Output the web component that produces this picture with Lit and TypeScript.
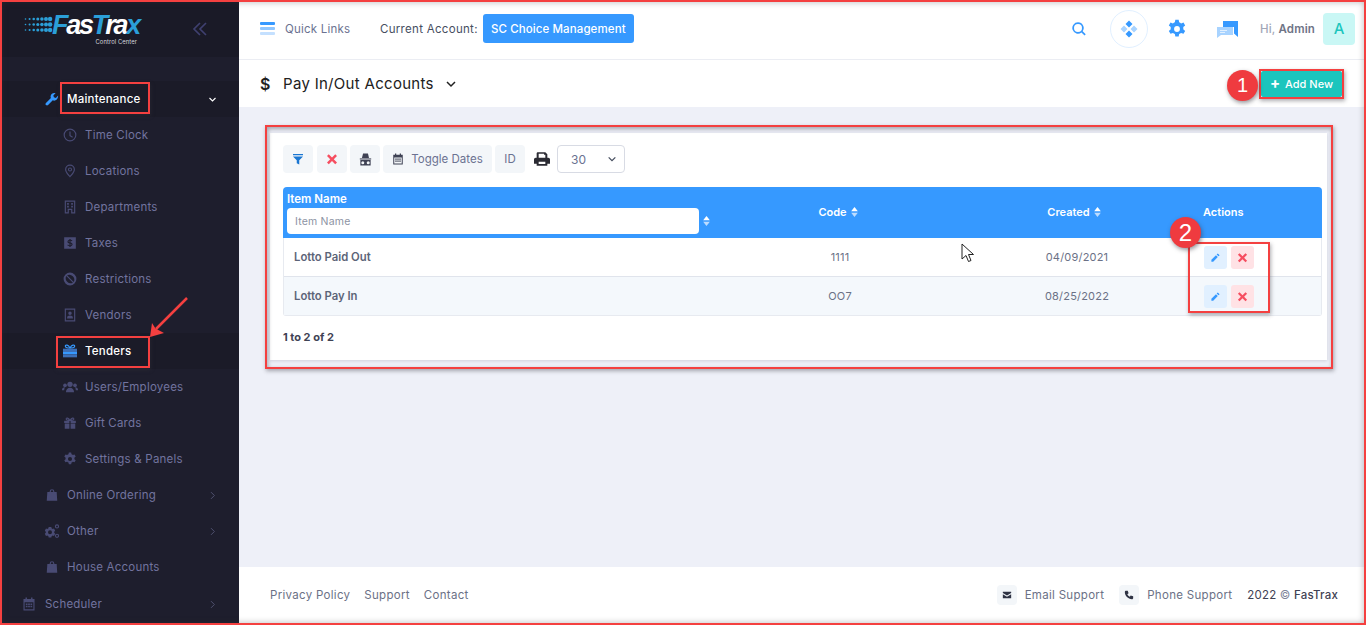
import { LitElement, html, css, svg } from "lit";
import { customElement } from "lit/decorators.js";

const I = (d: any, vb = "0 0 24 24", cls = "") => html`<svg class="ic ${cls}" viewBox=${vb} fill="currentColor">${d}</svg>`;
const icons: Record<string, any> = {
  wrench: svg`<path d="M22.5 6.2l-3.9 3.9-3.4-.9-.9-3.4 3.9-3.9c-2.3-.8-5-.3-6.800 1.500-1.900 1.900-2.300 4.600-1.300 6.900L1.700 18.700c-1.100 1.100-1.100 2.700 0 3.700 1 1 2.600 1 3.600 0l8-8.100c2.300 1 5 .5 6.900-1.300 1.800-1.800 2.400-4.500 2.300-6.800z"/>`,
  clock: svg`<path fill-rule="evenodd" d="M12 1a11 11 0 100 22 11 11 0 000-22zm0 2a9 9 0 110 18 9 9 0 010-18z"/><path d="M11 6h2v6.500l4 2.300-1 1.700-5-3z"/>`,
  pin: svg`<path fill-rule="evenodd" d="M12 1a8.500 8.500 0 00-8.500 8.500C3.500 15 12 23 12 23s8.500-8 8.500-13.500A8.500 8.500 0 0012 1zm0 2a6.500 6.500 0 016.500 6.500c0 3.500-4.500 8.700-6.500 10.700-2-2-6.500-7.200-6.500-10.700A6.500 6.500 0 0112 3z"/><path fill-rule="evenodd" d="M12 6a3.500 3.500 0 100 7 3.500 3.500 0 000-7zm0 1.700a1.800 1.800 0 110 3.600 1.800 1.800 0 010-3.600z"/>`,
  building: svg`<path fill-rule="evenodd" d="M3 1h18v22h-7v-6h-4v6H3zm2 2v18h3v-6h8v6h3V3zm2 2h3v3H7zm7 0h3v3h-3zm-7 5h3v3H7zm7 0h3v3h-3z"/>`,
  dollar: svg`<path fill-rule="evenodd" d="M2 2h20v20H2zm9 3v1.500c-2 .3-3.300 1.500-3.300 3.200 0 1.900 1.400 2.700 3.300 3.200v3c-1-.1-1.900-.6-2.500-1.200L7.200 16c.9.900 2.200 1.400 3.800 1.600V19h2v-1.400c2.100-.3 3.400-1.600 3.400-3.400 0-1.900-1.400-2.700-3.400-3.200V8.200c.7.100 1.400.4 2 .9l1.200-1.400c-.8-.7-1.900-1.100-3.200-1.200V5zm0 3.100v2.400c-.9-.3-1.400-.6-1.400-1.200s.5-1.100 1.400-1.200zm2 5.300c.9.300 1.500.6 1.500 1.300s-.6 1.100-1.500 1.200z"/>`,
  ban: svg`<path fill-rule="evenodd" d="M12 1a11 11 0 100 22 11 11 0 000-22zM5.600 7l11.400 11.400A8.500 8.500 0 015.600 7zM7 5.600A8.500 8.500 0 0118.400 17z"/>`,
  contact: svg`<path fill-rule="evenodd" d="M3 1h18v22H3zm2 2v18h14V3zm7 3a3 3 0 110 6 3 3 0 010-6zM7 17c0-2.500 2-4 5-4s5 1.500 5 4v1H7z"/>`,
  gift1: svg`<path fill="none" stroke="#3699ff" stroke-width="1.800" d="M12 7.500C9.500 2.500 5 2 5 4.800S9.500 7.500 12 7.500c2.500 0 7 0 7-2.700S14.500 2.500 12 7.500z"/><path fill="#3d6fb8" d="M1.500 8.500h21v5h-21z"/><path fill="#3699ff" d="M1.500 13.500h21V17h-21z"/><path fill="#3d6fb8" d="M1.500 17h21v4.500h-21z"/>`,
  users: svg`<circle cx="12" cy="8" r="4"/><circle cx="4.500" cy="9.500" r="2.800"/><circle cx="19.500" cy="9.500" r="2.800"/><path d="M6 19c0-3.500 2.500-6 6-6s6 2.500 6 6v1H6zM0 16c0-2 1.500-3.500 4.500-3.500-.7 1-1.200 2.500-1.200 4.500H0zM24 16c0-2-1.500-3.500-4.500-3.500.7 1 1.200 2.500 1.200 4.500H24z"/>`,
  gift: svg`<path d="M2 8h9v4H2zM13 8h9v4h-9zM3 13h8v9H3zM13 13h8v9h-8z"/><path fill="none" stroke="currentColor" stroke-width="2" d="M12 7.500C9 3 5.500 2.500 5.500 5S9 7.500 12 7.500 18.500 7.500 18.500 5 15 3 12 7.500z"/>`,
  gear: svg`<path fill-rule="evenodd" d="M10 1h4l.6 3a8 8 0 012.300 1.300l2.900-1 2 3.400-2.300 2a8 8 0 010 2.600l2.300 2-2 3.400-2.900-1a8 8 0 01-2.300 1.300l-.6 3h-4l-.6-3a8 8 0 01-2.300-1.300l-2.900 1-2-3.400 2.300-2a8 8 0 010-2.600l-2.300-2 2-3.400 2.900 1A8 8 0 019.400 4zM12 8.500a3.500 3.500 0 100 7 3.500 3.500 0 000-7z"/>`,
  bag: svg`<path fill-rule="evenodd" d="M8 7V6a4 4 0 018 0v1h4l1 15H3L4 7zm2 0h4V6a2 2 0 00-4 0z"/>`,
  gears: svg`<path fill-rule="evenodd" d="M7 6h4l.4 2 1.600 1 2-.6 1.800 3.100-1.500 1.500v1.800l1.500 1.500-1.800 3.100-2-.6-1.600 1-.4 2H7l-.4-2-1.600-1-2 .6-1.800-3.100L2.700 14.800v-1.800L1.200 11.500 3 8.400l2 .6 1.600-1zm2 5a3 3 0 100 6 3 3 0 000-6z"/><path fill-rule="evenodd" d="M19.500 2a3.200 3.200 0 100 6.400 3.200 3.200 0 000-6.400zm0 1.700a1.500 1.500 0 110 3 1.500 1.500 0 010-3zM19.500 16a3.200 3.200 0 100 6.400 3.200 3.200 0 000-6.400zm0 1.700a1.500 1.500 0 110 3 1.500 1.500 0 010-3z"/>`,
  cal: svg`<path fill-rule="evenodd" d="M6 1h2.500v2.500h7V1H18v2.500h3.500V23h-19V3.500H6zM4.500 9v12h15V9zM6.500 11h3v2.500h-3zm4 0h3v2.500h-3zm4 0h3v2.500h-3zm-8 4h3v2.500h-3zm4 0h3v2.500h-3zm4 0h3v2.500h-3z"/>`,
  filter: svg`<path d="M2 2h20v2.500H2zM2 7h20l-7.500 7.500V23l-5-2.500v-6z"/>`,
  x: svg`<path d="M5.500 2.500L12 9l6.500-6.500 3.500 3.500-6.500 6.500 6.500 6.500-3.500 3.500L12 16l-6.500 6.500L2 19l6.500-6.500L2 6z"/>`,
  spy: svg`<path d="M7.500 1h9l2 8h-13z"/><path d="M1.500 10h21v2h-21z"/><path fill-rule="evenodd" d="M2.500 13h19v10h-19zm4.500 2a2.800 2.800 0 000 5.600A2.800 2.800 0 007 15zm10 0a2.800 2.800 0 000 5.600 2.800 2.800 0 000-5.600z"/>`,
  print: svg`<path fill-rule="evenodd" d="M5 2h12l3 3v5h1.500A2.500 2.500 0 0124 12.500V19h-4v3H4v-3H0v-6.500A2.500 2.500 0 012.500 10H4V3zm2 2v6h10V5.500h-2V4zm0 12v3.500h10V16z"/>`,
  pencil: svg`<path d="M17 3l4 4-2.500 2.500-4-4zM13 7l4 4L7 21H3v-4z"/>`,
  search: svg`<path fill-rule="evenodd" d="M10.500 2a8.500 8.500 0 105.200 15.200l4.600 4.600 1.800-1.800-4.600-4.600A8.500 8.500 0 0010.500 2zm0 2.500a6 6 0 110 12 6 6 0 010-12z"/>`,
  mail: svg`<path d="M2 4h20v3l-10 6L2 7zM2 10l10 6 10-6v10H2z"/>`,
  phone: svg`<path d="M5 2h4l2 6-3 2c1 2.500 3.500 5 6 6l2-3 6 2v4c0 1.500-1 3-3 3C10 22 2 14 2 5c0-2 1.500-3 3-3z"/>`,
  chevD: svg`<path fill="none" stroke="currentColor" stroke-width="3" d="M4 8l8 8 8-8"/>`,
  chevR: svg`<path fill="none" stroke="currentColor" stroke-width="2.600" d="M8 3l9 9-9 9"/>`,
};

const sub = [
  ["clock", "Time Clock"], ["pin", "Locations"], ["building", "Departments"], ["dollar", "Taxes"],
  ["ban", "Restrictions"], ["contact", "Vendors"], ["gift1", "Tenders"], ["users", "Users/Employees"],
  ["gift", "Gift Cards"], ["gear", "Settings & Panels"],
];
const rows = [
  { name: "Lotto Paid Out", code: "1111", date: "04/09/2021" },
  { name: "Lotto Pay In", code: "OO7", date: "08/25/2022" },
];
const dots = [0, 1, 2].flatMap((r) =>
  [0, 1, 2, 3, 4, 5, 6].map((c) => ({ x: 1.500 + c * 4.100, y: 3 + r * 5.500, r: 0.8 + c * 0.24 }))
);

@customElement("app-root")
export class AppRoot extends LitElement {
  static styles = css`
    :host { display: flex; position: relative; width: 1366px; height: 625px; overflow: hidden; background: #eef0f8;
      font-family: "Inter", "Noto Sans", sans-serif; font-size: 11.5px; color: #464e5f; }
    * { box-sizing: border-box; }
    .ic { width: 14px; height: 14px; flex: none; display: block; }

    /* sidebar */
    .side { width: 239px; flex: none; background: #1e1e2d; display: flex; flex-direction: column; }
    .brand { height: 57px; background: #1a1a27; display: flex; align-items: flex-start; justify-content: space-between; padding: 13px 31px 0 24px; flex: none; }
    .logo { display: flex; align-items: flex-start; }
    .logo svg { width: 29px; height: 18px; margin-top: 3px; flex: none; }
    .lockup { width: 88px; margin-left: -1px; display: flex; flex-direction: column; }
    .word { font: italic 700 27px/25px "Liberation Sans", sans-serif; color: #fff; letter-spacing: -2.300px; white-space: nowrap; }
    .word b { color: #2b9fd8; font-weight: 700; }
    .word .tx { color: #2b9fd8; }
    .tag { align-self: flex-end; margin-right: 3px; font: 400 5.800px/7px "Inter", sans-serif; color: #d6d6de; letter-spacing: .1px; }
    .collapse { width: 16px; height: 16px; color: #3f4070; margin-top: 8px; }
    .collapse svg { width: 16px; height: 16px; display: block; }
    .menu { padding-top: 24px; display: flex; flex-direction: column; }
    .item { height: 36px; display: flex; align-items: center; color: #72749f; white-space: nowrap; letter-spacing: .22px; }
    .item .ic { color: #494b74; }
    .l1 { padding-left: 45px; }
    .l1 .lab { margin-left: 8px; }
    .l2 { padding-left: 63px; }
    .l2 .lab { margin-left: 8px; }
    .l0 { padding-left: 22px; margin-top: 1px; }
    .l0 .lab { margin-left: 9px; }
    .item .wide { width: 16px; height: 16px; margin: 0 -1px; }
    .chev { margin-left: auto; margin-right: 22px; width: 9px !important; height: 9px !important; color: #4f506f !important; }
    .active { background: #1b1b28; color: #fff; font-weight: 500; }
    .active .ic { color: #3699ff; }
    .active .chev { color: #fff !important; }

    /* main */
    .main { flex: 1; min-width: 0; display: flex; flex-direction: column; }
    .top { height: 60px; flex: none; background: #fff; border-bottom: 1px solid #ebedf3; display: flex; align-items: center; padding: 0 11px 2px 21px; }
    .burger { width: 15px; height: 13px; display: flex; flex-direction: column; justify-content: space-between; margin-right: 10px; }
    .burger i { display: block; height: 3px; border-radius: 1px; background: #3699ff; }
    .burger i:nth-child(2) { background: #8fc6ff; } .burger i:nth-child(3) { background: #c4e0ff; }
    .ql { color: #6b7291; letter-spacing: .2px; width: 95px; }
    .ca { color: #464e5f; letter-spacing: .3px; margin-right: 5px; }
    .acct { background: #3699ff; color: #fff; height: 29px; width: 151px; border-radius: 3px; display: flex; align-items: center; justify-content: center; font-weight: 500; letter-spacing: .1px; }
    .tools { margin-left: auto; display: flex; align-items: center; }
    .t-search { color: #3699ff; width: 16px; height: 16px; margin-right: 23px; }
    .orb { width: 38px; height: 38px; border-radius: 50%; border: 1.500px solid #e1f0ff; display: flex; align-items: center; justify-content: center; margin-right: 19px; }
    .orb svg { width: 20px; height: 20px; display: block; }
    .t-gear { color: #3699ff; width: 20px; height: 20px; margin-right: 30px; }
    .chat { width: 21px; height: 18px; margin-right: 22px; display: block; }
    .hi { color: #a2a7b8; font-weight: 500; margin-right: 8px; letter-spacing: .15px; }
    .hi b { color: #6f7486; font-weight: 600; }
    .av { width: 32px; height: 32px; border-radius: 4px; background: #c9f7f5; color: #1bc5bd; font-size: 15px; font-weight: 500; display: flex; align-items: center; justify-content: center; }

    .subh { height: 47px; flex: none; background: #fff; display: flex; align-items: center; padding: 0 24px 0 21px; }
    .dol { font-size: 16px; font-weight: 600; color: #212121; width: 23px; }
    .title { font-size: 15px; color: #212121; letter-spacing: .3px; }
    .tch { width: 12px !important; height: 12px !important; margin-left: 11px; color: #212121; }
    .add { margin-left: auto; width: 81px; height: 26px; background: #1bc5bd; color: #fff; border-radius: 2px; display: flex; align-items: center; justify-content: center; gap: 5px; font-weight: 500; font-size: 11px; }
    .plus { font-size: 15px; line-height: 15px; font-weight: 700; margin-top: -3px; }

    .content { flex: 1; min-height: 0; padding: 26px 39px 0 31px; }
    .card { background: #fff; padding: 12px 5px 0 13px; height: 227px; box-shadow: 0 1px 3px rgba(80,80,110,.2); }
    .bar { display: flex; align-items: center; height: 28px; }
    .b { height: 28px; background: #f3f6f9; border-radius: 4px; display: flex; align-items: center; justify-content: center; margin-right: 3px; color: #6b7291; }
    .b .ic { width: 12px; height: 12px; }
    .w30 { width: 30px; }
    .b-x { color: #f64e60; }
    .b-f { color: #1976d2; margin-right: 4px; }
    .b-s { color: #3f4254; }
    .b-s .ic { width: 13px; height: 13px; }
    .dates { width: 109px; gap: 7px; }
    .dates .ic { color: #3f4254; }
    .print { width: 16px; height: 16px; color: #2b2b33; margin: 0 7px 0 6px; }
    .sel { width: 68px; height: 28px; border: 1px solid #d8dbe4; border-radius: 4px; padding: 0 7px 0 13px; display: flex; align-items: center; justify-content: space-between; color: #6b7291; font-size: 12px; }
    .sel .ic { width: 10px; height: 10px; color: #464e5f; }

    .table { margin-top: 14px; }
    .row { display: grid; grid-template-columns: 439px 236px 220px 144px; align-items: center; }
    .head { height: 51px; background: #3699ff; border-radius: 4px 4px 0 0; color: #fff; font-weight: 600; font-size: 11px; }
    .namecol { display: flex; flex-direction: column; padding: 5px 0 0 4px; height: 100%; font-size: 11.500px; }
    .inp-row { display: flex; align-items: center; gap: 4px; margin-top: 2px; }
    .inp { width: 412px; height: 26px; background: #fff; border-radius: 4px; color: #8d93a3; font-weight: 400; display: flex; align-items: center; padding-left: 8px; font-size: 10.500px; letter-spacing: .2px; }
    .sort { width: 7px; height: 10px; display: block; flex: none; }
    .hc { display: flex; justify-content: center; align-items: center; gap: 4px; margin-top: -2px; }
    .hc.code { padding-right: 4px; }
    .hc.cre { padding-left: 12px; }
    .act { padding-left: 25px; margin-top: -2px; }
    .body { border: 1px solid #e7eaf0; border-top: none; border-radius: 0 0 3px 3px; }
    .tr { height: 39px; border-bottom: 1px solid #e0e4ec; grid-template-columns: 438px 236px 220px 144px; color: #6b7186; }
    .tr:last-child { border-bottom: none; height: 38px; }
    .tr.alt { background: #f4f8fc; }
    .nm { padding-left: 10px; font-weight: 600; color: #5c6478; font-size: 11.300px; }
    .cc { text-align: center; font-size: 11px; letter-spacing: .2px; }
    .cc.dt { padding-left: 18px; }
    .acts { display: flex; gap: 4px; padding-left: 26px; }
    .ab { width: 23px; height: 23px; border-radius: 3px; display: flex; align-items: center; justify-content: center; }
    .ab .ic { width: 11px; height: 11px; }
    .edit { background: #e1f0ff; color: #3699ff; }
    .del { background: #ffe2e5; color: #f64e60; }
    .count { margin-top: 14px; font-weight: 700; color: #3f4254; font-size: 11px; }

    .foot { height: 58px; flex: none; background: #fff; display: flex; align-items: center; padding: 0 28px 3px 31px; color: #6b7186; letter-spacing: .3px; }
    .fl { margin-right: 14px; }
    .fr { margin-left: auto; display: flex; align-items: center; }
    .fi { width: 20px; height: 20px; background: #f3f6f9; border-radius: 4px; display: flex; align-items: center; justify-content: center; color: #2f3344; margin-right: 8px; }
    .fi .ic { width: 10px; height: 10px; }
    .ft { margin-right: 15px; }
    .copy { color: #3f4254; letter-spacing: .2px; } .copy b { font-weight: 500; color: #3f4254; } .copy i { font-style: normal; color: #80859a; font-weight: 400; }

    /* annotations over the screenshot */
    .frame { position: absolute; inset: 0; border: 2px solid #f44040; box-shadow: inset 0 0 6px rgba(50,50,60,.35); pointer-events: none; }
    .box { position: absolute; border: 2px solid #f44040; box-shadow: 1px 2px 4px rgba(50,50,60,.4); pointer-events: none; }
    .b-maint { left: 60px; top: 82px; width: 90px; height: 32px; }
    .b-tend { left: 56px; top: 336px; width: 94px; height: 32px; }
    .b-add { left: 1259px; top: 69px; width: 85px; height: 30px; }
    .b-card { left: 265px; top: 125px; width: 1068px; height: 244px; box-shadow: 1px 2px 4px rgba(50,50,60,.4), inset 1px 2px 4px rgba(50,50,60,.4); }
    .b-acts { left: 1188px; top: 242px; width: 82px; height: 71px; }
    .badge { position: absolute; width: 31px; height: 31px; border-radius: 50%; background: #ef3b3f; color: #fff; font: 400 20px/31px "Liberation Sans", sans-serif; text-align: center; box-shadow: 1px 2px 4px rgba(50,50,60,.5); }
    .n1 { left: 1227px; top: 70px; }
    .n2 { left: 1170px; top: 217px; font-size: 24px; }
    .arrow { position: absolute; left: 145px; top: 292px; width: 48px; height: 48px; }
    .cursor { position: absolute; left: 961px; top: 243px; width: 14px; height: 20px; }
  `;

  render() {
    return html`
      <aside class="side">
        <div class="brand">
          <div class="logo">
            <svg viewBox="0 0 29 18">${dots.map((d) => svg`<circle cx=${d.x} cy=${d.y} r=${d.r} fill="#2b9fd8"/>`)}</svg>
            <div class="lockup">
              <div class="word"><b>F</b>as<span class="tx">T</span>ra<span class="tx">x</span></div>
              <div class="tag">Control Center</div>
            </div>
          </div>
          <div class="collapse"><svg viewBox="0 0 24 24" fill="none" stroke="currentColor" stroke-width="2.500"><path d="M12 3l-9 9 9 9M21 3l-9 9 9 9"/></svg></div>
        </div>
        <nav class="menu">
          <div class="item l1 active">${I(icons.wrench)}<span class="lab">Maintenance</span>${I(icons.chevD, "0 0 24 24", "chev")}</div>
          ${sub.map(([ic, t]) => html`<div class="item l2 ${t === "Tenders" ? "active" : ""}">${I(icons[ic], "0 0 24 24", ic === "users" || ic === "gift1" ? "wide" : "")}<span class="lab">${t}</span></div>`)}
          <div class="item l1">${I(icons.bag)}<span class="lab">Online Ordering</span>${I(icons.chevR, "0 0 24 24", "chev")}</div>
          <div class="item l1">${I(icons.gears, "0 0 24 24", "wide")}<span class="lab">Other</span>${I(icons.chevR, "0 0 24 24", "chev")}</div>
          <div class="item l1">${I(icons.bag)}<span class="lab">House Accounts</span></div>
          <div class="item l0">${I(icons.cal)}<span class="lab">Scheduler</span>${I(icons.chevR, "0 0 24 24", "chev")}</div>
        </nav>
      </aside>

      <div class="main">
        <header class="top">
          <div class="burger"><i></i><i></i><i></i></div>
          <span class="ql">Quick Links</span>
          <span class="ca">Current Account:</span>
          <div class="acct">SC Choice Management</div>
          <div class="tools">
            ${I(icons.search, "0 0 24 24", "t-search")}
            <div class="orb"><svg viewBox="0 0 20 20"><path fill="#3699ff" d="M10 1.500l3.500 3.500L10 8.500 6.500 5zM10 11.500l3.500 3.500-3.500 3.500L6.500 15z"/><path fill="#a8d3ff" d="M5 6.500L8.500 10 5 13.500 1.500 10zM15 6.500l3.500 3.500-3.500 3.500-3.500-3.500z"/></svg></div>
            ${I(icons.gear, "0 0 24 24", "t-gear")}
            <svg class="chat" viewBox="0 0 21 18"><path fill="#3699ff" d="M6 1h15v16l-4-3.500V7H6z"/><path fill="#a8d3ff" d="M0 7h16v8H4l-4 3z"/><path fill="#e1f0ff" d="M3 10h7v1H3zM3 12h5v1H3z"/></svg>
            <span class="hi">Hi, <b>Admin</b></span>
            <div class="av">A</div>
          </div>
        </header>

        <div class="subh">
          <span class="dol">$</span>
          <span class="title">Pay In/Out Accounts</span>
          ${I(icons.chevD, "0 0 24 24", "tch")}
          <div class="add"><span class="plus">+</span>Add New</div>
        </div>

        <section class="content">
          <div class="card">
            <div class="bar">
              <div class="b w30 b-f">${I(icons.filter)}</div>
              <div class="b w30 b-x">${I(icons.x)}</div>
              <div class="b w30 b-s">${I(icons.spy)}</div>
              <div class="b dates">${I(icons.cal)}<span>Toggle Dates</span></div>
              <div class="b w30">ID</div>
              ${I(icons.print, "0 0 24 24", "print")}
              <div class="sel"><span>30</span>${I(icons.chevD)}</div>
            </div>
            <div class="table">
              <div class="row head">
                <div class="namecol">
                  <span>Item Name</span>
                  <div class="inp-row"><div class="inp">Item Name</div>${this.sortIcon()}</div>
                </div>
                <div class="hc code">Code ${this.sortIcon()}</div>
                <div class="hc cre">Created ${this.sortIcon()}</div>
                <div class="act">Actions</div>
              </div>
              <div class="body">
                ${rows.map((r, i) => html`
                  <div class="row tr ${i % 2 ? "alt" : ""}">
                    <div class="nm">${r.name}</div>
                    <div class="cc">${r.code}</div>
                    <div class="cc dt">${r.date}</div>
                    <div class="acts">
                      <div class="ab edit">${I(icons.pencil)}</div>
                      <div class="ab del">${I(icons.x)}</div>
                    </div>
                  </div>`)}
              </div>
              <div class="count">1 to 2 of 2</div>
            </div>
          </div>
        </section>

        <footer class="foot">
          <span class="fl">Privacy Policy</span>
          <span class="fl">Support</span>
          <span class="fl">Contact</span>
          <div class="fr">
            <div class="fi">${I(icons.mail)}</div><span class="ft">Email Support</span>
            <div class="fi">${I(icons.phone)}</div><span class="ft">Phone Support</span>
            <span class="copy">2022 <i>©</i> <b>FasTrax</b></span>
          </div>
        </footer>
      </div>

      <div class="frame"></div>
      <div class="box b-maint"></div>
      <div class="box b-tend"></div>
      <div class="box b-add"></div>
      <div class="box b-card"></div>
      <div class="box b-acts"></div>
      <div class="badge n1">1</div>
      <div class="badge n2">2</div>
      <svg class="arrow" viewBox="0 0 48 48"><path d="M42 6L11 37" fill="none" stroke="#f44040" stroke-width="2.500"/><path d="M5 45l2-14 3.500 5.500L19 41z" fill="#f44040"/></svg>
      <svg class="cursor" viewBox="0 0 14 20"><path d="M1 1v15l4-3.500 2.500 6 2.500-1-2.500-6h5z" fill="#fff" stroke="#222" stroke-width="1"/></svg>
    `;
  }

  sortIcon() {
    return html`<svg class="sort" viewBox="0 0 8 12"><path fill="#fff" d="M4 0l4 5H0z"/><path fill="#bcdcff" d="M4 12L0 7h8z"/></svg>`;
  }
}
